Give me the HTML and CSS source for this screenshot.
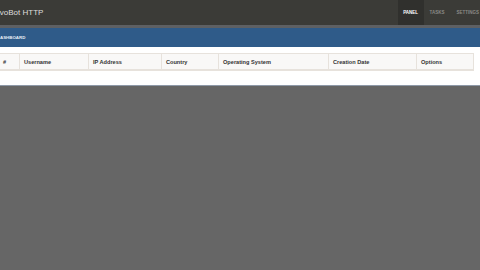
FILE: index.html
```html
<!DOCTYPE html>
<html>
<head>
<meta charset="utf-8">
<link rel="stylesheet" href="styles.css">
</head>
<body>
<header class="navbar">
  <div class="brand">EvoBot HTTP</div>
  <nav class="nav">
    <a class="nav-item active">PANEL</a>
    <a class="nav-item">TASKS</a>
    <a class="nav-item">SETTINGS</a>
  </nav>
</header>
<div class="divider"></div>
<section class="panel">
  <div class="panel-heading">DASHBOARD</div>
  <div class="panel-body">
    <table class="table">
      <colgroup>
        <col class="c1"><col class="c2"><col class="c3"><col class="c4"><col class="c5"><col class="c6"><col class="c7">
      </colgroup>
      <thead>
        <tr>
          <th>#</th><th>Username</th><th>IP Address</th><th>Country</th><th>Operating System</th><th>Creation Date</th><th>Options</th>
        </tr>
      </thead>
    </table>
  </div>
</section>
</body>
</html>
```
FILE: styles.css
```css
html, body {
  margin: 0;
  padding: 0;
}
body {
  background: #666666;
  width: 480px;
  height: 270px;
  overflow: hidden;
  font-family: "Liberation Sans", Arial, sans-serif;
}
.navbar {
  height: 25px;
  background: #3b3b37;
  display: flex;
  align-items: center;
  justify-content: space-between;
}
.brand {
  margin-left: -5.5px;
  font-size: 8px;
  color: #dddddd;
  white-space: nowrap;
}
.nav {
  display: flex;
  align-self: stretch;
  margin-right: -5px;
}
.nav-item {
  display: flex;
  align-items: center;
  padding: 0 6px;
  font-size: 4.5px;
  font-weight: bold;
  color: #8a8a85;
}
.nav-item.active {
  background: #30302d;
  color: #ffffff;
  padding: 0 5.5px;
}
.divider {
  height: 3px;
  background: #5e6063;
}
.panel {
  background: #ffffff;
  border-bottom: 1px solid #8e99a8;
}
.panel-heading {
  height: 19px;
  background: #2f5b89;
  color: #e8eef5;
  font-size: 4.4px;
  font-weight: bold;
  display: flex;
  align-items: center;
  margin-left: -3.2px;
  white-space: nowrap;
}
.panel-body {
  padding: 6px 0 14px 0;
  margin-left: -2px;
}
.table {
  border-collapse: collapse;
  table-layout: fixed;
  width: 475px;
}
.c1 { width: 21px; }
.c2 { width: 69px; }
.c3 { width: 73px; }
.c4 { width: 57px; }
.c5 { width: 110px; }
.c6 { width: 88px; }
.c7 { width: 57px; }
.table th {
  height: 15px;
  padding: 0 4px;
  text-align: left;
  font-size: 5.6px;
  font-weight: bold;
  color: #333333;
  background: #f9f8f7;
  border: 1px solid #e7e2dc;
  border-bottom-width: 2px;
  white-space: nowrap;
}
```
